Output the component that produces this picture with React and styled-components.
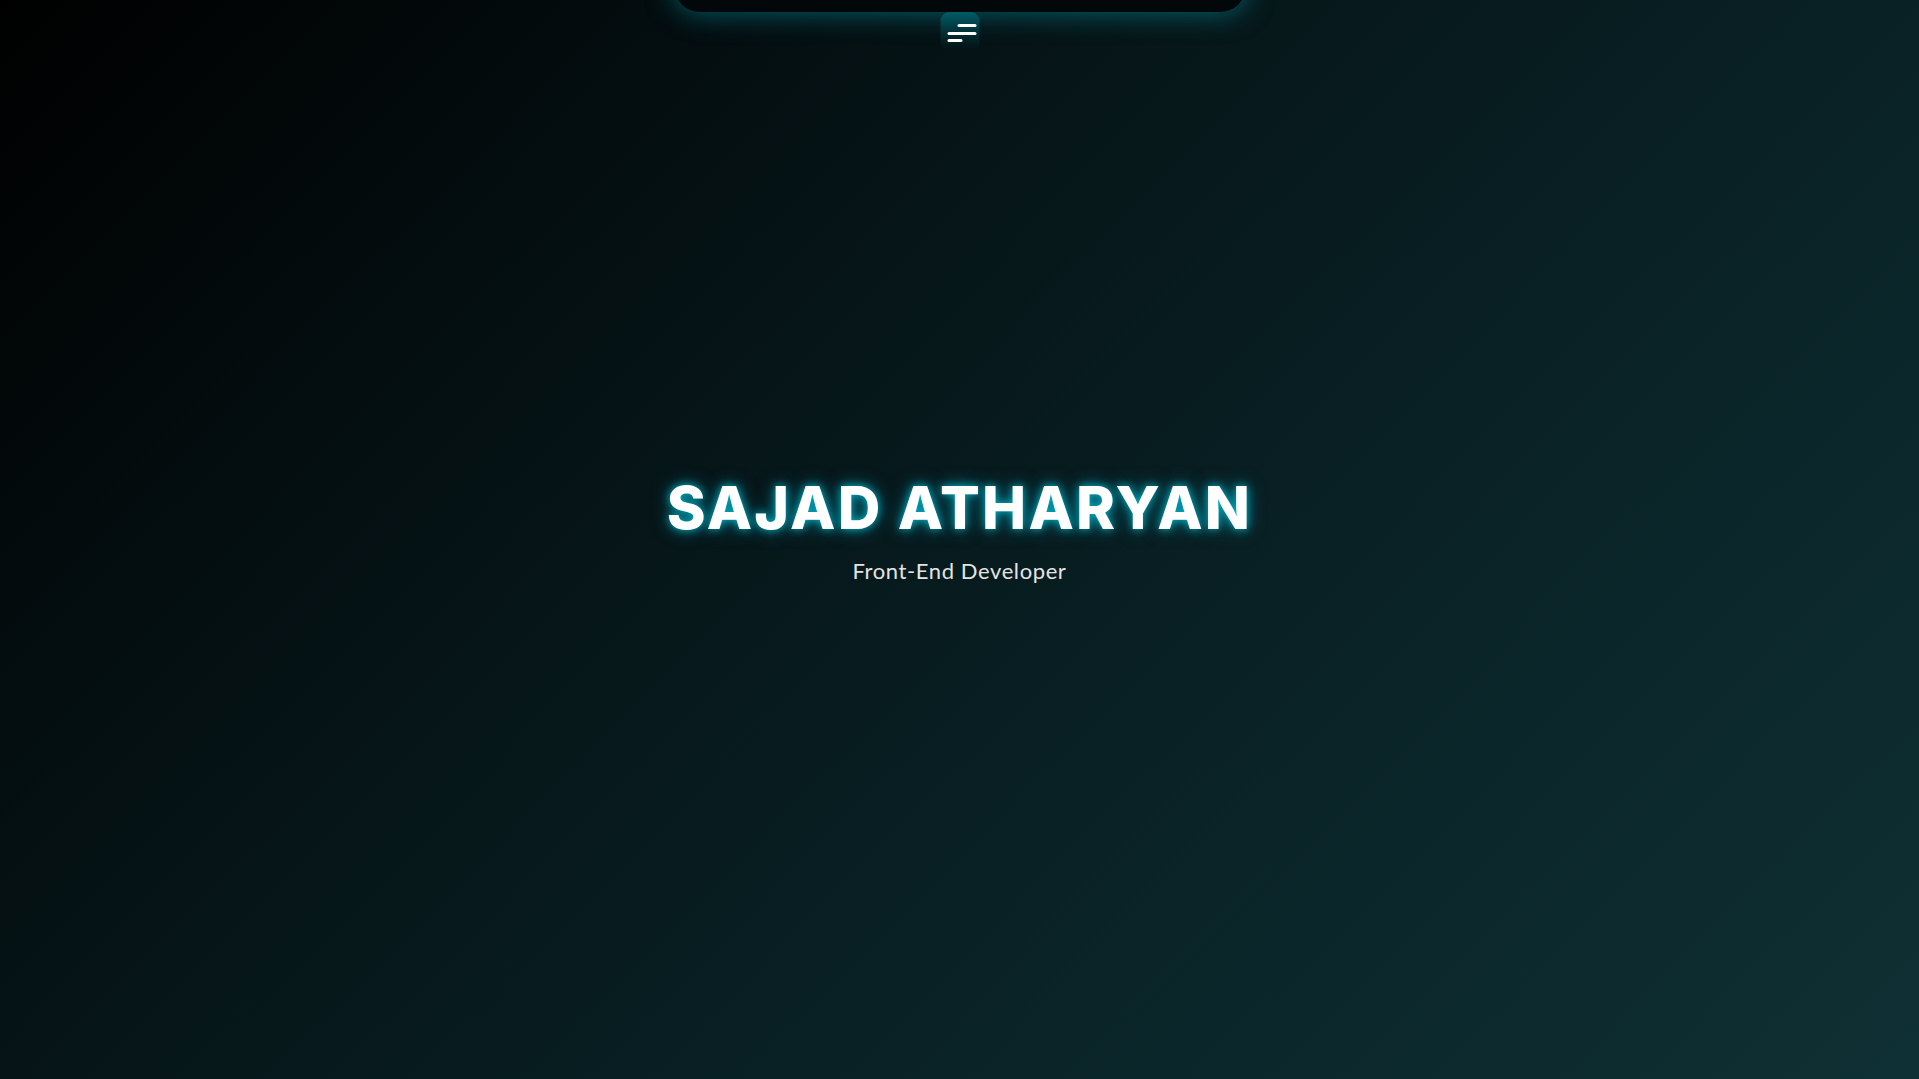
import React from "react";
import styled, { createGlobalStyle } from "styled-components";

const GlobalStyle = createGlobalStyle`
  * { box-sizing: border-box; }
  html, body {
    margin: 0;
    padding: 0;
    background: #000;
    color: #fff;
    font-family: Inter, "Open Sans", sans-serif;
  }
  html { overflow-y: scroll; }
  html::-webkit-scrollbar { width: 15px; background: #2e2b2b; }
  html::-webkit-scrollbar-track { background: #2e2b2b; }
  html::-webkit-scrollbar-thumb {
    background: #9d9d9d;
    border-radius: 8px;
    border: 3px solid #2e2b2b;
  }
  html::-webkit-scrollbar-button:single-button {
    display: block;
    height: 17px;
    background-color: #2e2b2b;
    background-repeat: no-repeat;
    background-position: center;
  }
  html::-webkit-scrollbar-button:single-button:vertical:decrement {
    background-image: linear-gradient(to top, transparent 0, transparent 0);
    border-bottom: 0;
  }
`;

const Page = styled.div`
  background: #061417;
`;

const NavBar = styled.nav`
  position: fixed;
  top: -60px;
  left: 50%;
  transform: translateX(-50%);
  width: 572px;
  height: 72px;
  background: #020809;
  border-radius: 0 0 26px 26px;
  box-shadow: 0 0 28px rgba(0, 170, 190, 0.55);
  z-index: 10;
`;

const MenuButton = styled.button`
  position: fixed;
  top: 12px;
  left: 50%;
  transform: translateX(-50%);
  width: 39px;
  height: 40px;
  border: none;
  border-radius: 9px;
  background: linear-gradient(to bottom, rgba(0, 120, 135, 0.55), rgba(0, 60, 70, 0) 95%);
  display: flex;
  flex-direction: column;
  justify-content: flex-start;
  gap: 4.5px;
  padding: 12px 3px 0 7px;
  cursor: pointer;
  z-index: 11;
`;

const Line = styled.span`
  display: block;
  height: 3px;
  border-radius: 3px;
  background: #fff;
  width: ${({ $w }) => $w}px;
  align-self: ${({ $align }) => $align || "flex-start"};
`;

const Hero = styled.section`
  height: 100vh;
  background: linear-gradient(135deg, #000 0%, #061619 40%, #0a2428 70%, #0f3034 100%);
  display: flex;
  flex-direction: column;
  align-items: center;
  justify-content: center;
  padding-bottom: 22px;
`;

const Name = styled.h1`
  margin: 0;
  font-family: Inter, "Open Sans", sans-serif;
  font-weight: 800;
  font-size: 59px;
  letter-spacing: 2.2px;
  line-height: 1.2;
  color: #fff;
  text-shadow: 0 0 8px rgba(0, 200, 220, 0.85), 0 0 18px rgba(0, 170, 200, 0.6);
`;

const Role = styled.p`
  margin: 13px 0 0;
  font-family: Lato, "Open Sans", sans-serif;
  font-weight: 400;
  font-size: 22px;
  letter-spacing: 0.6px;
  color: #e4e4e4;
`;

const Section = styled.section`
  height: 100vh;
  background: linear-gradient(135deg, #0f3034 0%, #071a1d 100%);
`;

const Footer = styled.footer`
  height: 194px;
  background: #051214;
`;

export default function App() {
  return (
    <Page>
      <GlobalStyle />
      <NavBar />
      <MenuButton aria-label="menu">
        <Line $w={19} $align="flex-end" />
        <Line $w={29} />
        <Line $w={15} />
      </MenuButton>
      <Hero>
        <Name>SAJAD ATHARYAN</Name>
        <Role>Front-End Developer</Role>
      </Hero>
      <Section id="about" />
      <Section id="projects" />
      <Section id="contact" />
      <Footer />
    </Page>
  );
}
